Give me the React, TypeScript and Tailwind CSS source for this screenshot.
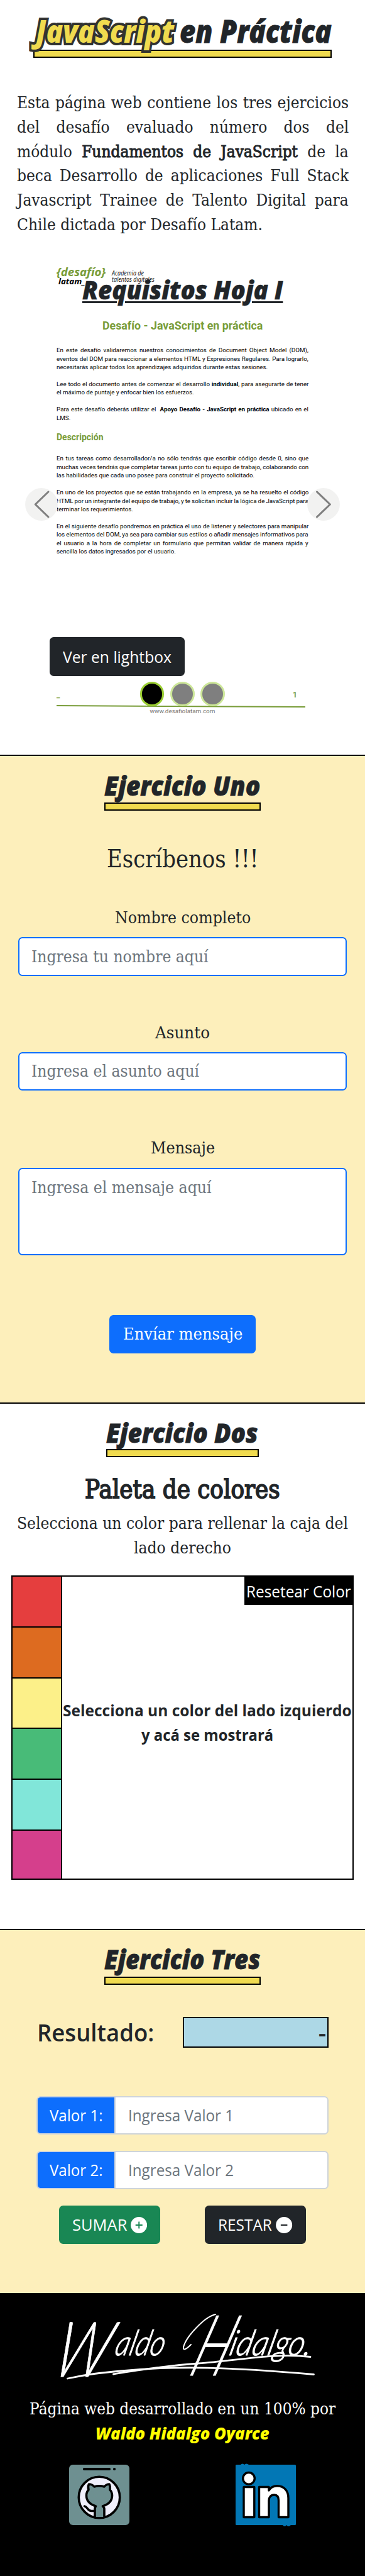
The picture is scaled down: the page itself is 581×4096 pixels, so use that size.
import { useLayoutEffect, useRef, useState, type ReactNode } from "react";

const SLAB = "font-['DejaVu_Serif',serif] text-[25.8px] leading-[38.72px]";
const SANS = "font-['Open_Sans','Noto_Sans',sans-serif] text-[25.8px] leading-[38.72px]";
const DISPLAY = "font-['Open_Sans','Noto_Sans',sans-serif] font-extrabold italic";

/* Stretches one line of text to the width of its box. */
function Fit({ className = "", children }: { className?: string; children: ReactNode }) {
  const box = useRef<HTMLDivElement>(null);
  const text = useRef<HTMLSpanElement>(null);
  const [scale, setScale] = useState(1);
  useLayoutEffect(() => {
    if (box.current && text.current && text.current.offsetWidth > 0) {
      setScale(box.current.offsetWidth / text.current.offsetWidth);
    }
  }, []);
  return (
    <div ref={box} className={`shrink-0 whitespace-nowrap ${className}`}>
      <span ref={text} className="inline-block origin-left" style={{ transform: `scaleX(${scale})` }}>
        {children}
      </span>
    </div>
  );
}

/* Justifies one line of text by widening or narrowing its word gaps. */
function Full({ children }: { children: ReactNode }) {
  const box = useRef<HTMLDivElement>(null);
  const text = useRef<HTMLSpanElement>(null);
  const [gap, setGap] = useState(0);
  useLayoutEffect(() => {
    if (box.current && text.current) {
      const spaces = (text.current.textContent ?? "").split(/\s/).length - 1;
      setGap((box.current.offsetWidth - text.current.offsetWidth) / spaces);
    }
  }, []);
  return (
    <div ref={box} className="whitespace-nowrap">
      <span ref={text} style={{ wordSpacing: `${gap}px` }}>
        {children}
      </span>
    </div>
  );
}

function SectionTitle({ children, width, gap }: { children: string; width: string; gap: string }) {
  return (
    <div className={`mx-auto ${width}`}>
      <Fit className={`${DISPLAY} w-full text-[43px] leading-[44px] [-webkit-text-stroke:0.8px_#212529]`}>{children}</Fit>
      <div className={`h-[13px] border-2 border-black bg-[#f0db4f] ${gap}`} />
    </div>
  );
}

function DocumentPage() {
  return (
    <div className="ml-[90px] w-[401.3px] pt-[28px] font-[Roboto,sans-serif] text-[9.8px] leading-[13.45px] text-black">
      <div className="flex h-[82.3px] font-['Noto_Sans',sans-serif] italic">
        <div className="w-[88px]">
          <Fit className="w-[78px] text-[17px] font-bold leading-[14px] text-[#789c38]">{"{desafío}"}</Fit>
          <Fit className="ml-[3px] mt-[0.6px] w-[43px] text-[13px] font-bold leading-[12.3px]">latam_</Fit>
        </div>
        <div className="pt-[2.8px] text-[10px] leading-[10.4px] text-[#222]">
          <Fit className="w-[51px]">Academia de</Fit>
          <Fit className="w-[68px]">talentos digitales</Fit>
        </div>
      </div>
      <Fit className="ml-[73.4px] w-[255px] text-[17.6px] font-bold leading-[20px] text-[#789c38]">
        Desafío - JavaScript en práctica
      </Fit>
      <div className="mt-[21.8px]">
        <Full>En este desafío validaremos nuestros conocimientos de Document Object Model (DOM),</Full>
        <Full>eventos del DOM para reaccionar a elementos HTML y Expresiones Regulares. Para lograrlo,</Full>
        <Fit className="w-[336px]">necesitarás aplicar todos los aprendizajes adquiridos durante estas sesiones.</Fit>
      </div>
      <div className="mt-[13.45px]">
        <Full>
          Lee todo el documento antes de comenzar el desarrollo <b>individual</b>, para asegurarte de tener
        </Full>
        <Fit className="w-[219px]">el máximo de puntaje y enfocar bien los esfuerzos.</Fit>
      </div>
      <div className="mt-[13.45px]">
        <Full>
          Para este desafío deberás utilizar el &nbsp;<b>Apoyo Desafío - JavaScript en práctica</b> ubicado en el
        </Full>
        <Fit className="w-[22px]">LMS.</Fit>
      </div>
      <Fit className="mt-[15.8px] w-[75px] text-[13.8px] font-bold leading-[16px] text-[#789c38]">Descripción</Fit>
      <div className="mt-[19.4px]">
        <Full>En tus tareas como desarrollador/a no sólo tendrás que escribir código desde 0, sino que</Full>
        <Full>muchas veces tendrás que completar tareas junto con tu equipo de trabajo, colaborando con</Full>
        <Fit className="w-[315px]">las habilidades que cada uno posee para construir el proyecto solicitado.</Fit>
      </div>
      <div className="mt-[13.45px]">
        <Full>En uno de los proyectos que se están trabajando en la empresa, ya se ha resuelto el código</Full>
        <Full>HTML por un integrante del equipo de trabajo, y te solicitan incluir la lógica de JavaScript para</Full>
        <Fit className="w-[122px]">terminar los requerimientos.</Fit>
      </div>
      <div className="mt-[13.45px]">
        <Full>En el siguiente desafío pondremos en práctica el uso de listener y selectores para manipular</Full>
        <Full>los elementos del DOM, ya sea para cambiar sus estilos o añadir mensajes informativos para</Full>
        <Full>el usuario a la hora de completar un formulario que permitan validar de manera rápida y</Full>
        <Fit className="w-[190px]">sencilla los datos ingresados por el usuario.</Fit>
      </div>
      <div className="mt-[213.7px] flex justify-between pr-[18.5px] text-[12px] font-bold leading-[14px] text-[#789c38]">
        <span>_</span>
        <span>1</span>
      </div>
      <svg className="mt-[9px] block h-[4px] w-[396px]" viewBox="0 0 396 4">
        <path d="M0 1.1L396 3" stroke="#789c38" strokeWidth="2" />
      </svg>
      <Fit className="ml-[148.6px] mt-[0.7px] w-[104px] text-[9.9px] leading-[12px] text-[#757575]">www.desafiolatam.com</Fit>
    </div>
  );
}

function Arrow({ d }: { d: string }) {
  return (
    <svg className="h-[52px] w-[52px]" viewBox="0 0 52 52" fill="none">
      <circle cx="26" cy="26" r="25.9" fill="#f2f2f1" />
      <path d={d} stroke="#7f7f7f" strokeWidth="3" strokeLinecap="round" strokeLinejoin="round" />
    </svg>
  );
}

function Carousel() {
  return (
    <section className="relative mt-[21.6px] h-[802.2px]">
      <DocumentPage />
      <h2 className="absolute left-[131px] top-[36.5px]">
        <Fit className={`${DISPLAY} w-[319px] text-[41px] leading-[50px] [-webkit-text-stroke:0.5px_#212529]`}>
          <span className="underline decoration-[3.2px] underline-offset-[3px]">Requisitos Hoja I</span>
        </Fit>
      </h2>
      <button className="absolute left-[40px] top-[377.7px]">
        <Arrow d="M37 6L16.2 26L37 46" />
      </button>
      <button className="absolute left-[489px] top-[377.7px]">
        <Arrow d="M15.5 6L36.4 26L15.5 46" />
      </button>
      <button className="absolute left-[79px] top-[615.3px] flex h-[61.3px] w-[214.8px] items-center justify-center rounded-[6.5px] bg-[#212529] text-white">
        <Fit className={`${SANS} w-[173px]`}>Ver en lightbox</Fit>
      </button>
      <div className="absolute left-[222.7px] top-[686px] flex gap-[9.7px]">
        <span className="h-[38.7px] w-[38.7px] rounded-full border-3 border-[#9acd32] bg-black" />
        <span className="h-[38.7px] w-[38.7px] rounded-full border-3 border-[#cce698] bg-[#7f7f7f]" />
        <span className="h-[38.7px] w-[38.7px] rounded-full border-3 border-[#cce698] bg-[#7f7f7f]" />
      </div>
    </section>
  );
}

const SWATCHES = ["bg-[#e53e3e]", "bg-[#dd6b20]", "bg-[#fcf089]", "bg-[#48bb78]", "bg-[#81e6d9]"];

function ValueInput({ label, hint }: { label: string; hint: string }) {
  return (
    <div className={`${SANS} flex h-[61.3px] items-center overflow-hidden rounded-[6.5px] border-2 border-[#ced4da] bg-white`}>
      <div className="flex h-full w-[124.2px] items-center justify-center border-r-2 border-[#ced4da] bg-[#0d6efd] text-white">
        <Fit className="w-[85px]">{label}</Fit>
      </div>
      <Fit className="ml-[20px] w-[168px] text-[#6c757d]">{hint}</Fit>
    </div>
  );
}

function RoundIcon({ plus }: { plus: boolean }) {
  return (
    <svg className="h-[26px] w-[26.3px]" viewBox="0 0 26 26" fill="none">
      <circle cx="13" cy="13" r="13" fill="white" />
      <path d={plus ? "M8.3 13h9.6M13.1 8.2v9.6" : "M8.5 13h9"} stroke={plus ? "#198754" : "#212529"} strokeWidth="1.9" strokeLinecap="round" />
    </svg>
  );
}

function Signature() {
  return (
    <svg className="block h-[165px] w-[581px] overflow-visible" viewBox="0 0 581 165" fill="none" stroke="white" strokeLinecap="round">
      <g fill="white" stroke="white" strokeWidth="0.8" fontFamily="Lato" fontStyle="italic" fontWeight="300">
        <text transform="translate(80 133) skewX(-16)" fontSize="122" textLength="84" lengthAdjust="spacingAndGlyphs">W</text>
        <text transform="translate(181 99) skewX(-14)" fontSize="56" strokeWidth="1.2" textLength="78" lengthAdjust="spacingAndGlyphs">aldo</text>
        <text transform="translate(298 131) skewX(-20)" fontSize="134" textLength="56" lengthAdjust="spacingAndGlyphs">H</text>
        <text transform="translate(363 99) skewX(-14)" fontSize="56" strokeWidth="1.2" textLength="130" lengthAdjust="spacingAndGlyphs">idalgo.</text>
      </g>
      <path d="M304 82C296 90 291 92 292 86C296 70 325 38 343 34" strokeWidth="2" />
      <path d="M107.5 136C140 129 160 127 192 124C280 115 370 118 499.5 129.5" strokeWidth="2.8" />
      <path d="M180.5 129C225 122 260 116 315 112C382 107 435 95 494 101.5" strokeWidth="2.8" />
    </svg>
  );
}

function GithubIcon() {
  return (
    <svg className="h-[96px] w-[96px]" viewBox="0 0 96 96" fill="none" stroke="black" strokeWidth="3.6" strokeLinecap="round" strokeLinejoin="round">
      <rect width="96" height="96" rx="6" fill="#6e9091" stroke="none" />
      <path d="M24 7H64M72 7h.1" strokeWidth="4.2" />
      <circle cx="48" cy="52" r="32.7" fill="#f0effb" />
      <path
        d="M41 83V70C41 68 42 67 42.5 66C33 63 27.5 58 27.5 49C27.5 45 29 42 31 40C30 37 30 34 31.5 31C35 31 38 32.5 40 35C45 33.5 51 33.5 56 35C58 32.5 61 31 64 31C65.5 34 65.5 37 65 40C67 42 68.5 45 68.5 49C68.5 58 63 63 53.5 66C54.5 67 56 68 56 70V83"
        fill="#6e9091"
      />
      <path d="M24.5 66C30 67 29 74 36 73.5H40" />
    </svg>
  );
}

function LinkedinIcon() {
  return (
    <svg className="h-[96px] w-[96px] overflow-visible" viewBox="0 0 96 96" fill="none" stroke="black" strokeWidth="3.4" strokeLinejoin="round">
      <rect width="96" height="96" rx="1.5" fill="#0277b5" stroke="none" />
      <path d="M8 0q3-3 6 0q3-3 7 0zM75 96q3 4 6 0q3 4 7 0z" fill="#0277b5" stroke="none" />
      <circle cx="21" cy="21.8" r="9.3" fill="white" />
      <rect x="13" y="35.5" width="16.8" height="48" fill="white" />
      <path
        d="M37.5 35.5H53V41C56 36 61 33.8 66 33.8C78 33.8 84 42 84 53V83.5H68.5V57C68.5 51 66 48 61.5 48C56 48 53 52 53 57V83.5H37.5Z"
        fill="white"
      />
    </svg>
  );
}

export default function App() {
  return (
    <main className="h-[4096px] w-[581px] overflow-hidden bg-white text-[#212529]">
      <header className="pt-[19.3px]">
        <h1 className={`${DISPLAY} relative z-10 flex pl-[57px] text-[49px] leading-[60px]`}>
          <Fit className="w-[220px] text-[#f0db4f] [-webkit-text-stroke:8px_#323330] [paint-order:stroke_fill]">JavaScript</Fit>
          <Fit className="ml-[9px] w-[242px] [-webkit-text-stroke:0.8px_#212529]">en Práctica</Fit>
        </h1>
        <div className="ml-[53.4px] h-[13px] w-[474.2px] border-2 border-black bg-[#f0db4f]" />
        <div className={`${SLAB} ml-[26.5px] mt-[51.9px] w-[582px] origin-left scale-x-[0.907]`}>
          <Full>Esta página web contiene los tres ejercicios</Full>
          <Full>del desafío evaluado número dos del</Full>
          <Full>
            módulo <span className="[-webkit-text-stroke:1px_#212529]">Fundamentos de JavaScript</span> de la
          </Full>
          <Full>beca Desarrollo de aplicaciones Full Stack</Full>
          <Full>Javascript Trainee de Talento Digital para</Full>
          <div>Chile dictada por Desafío Latam.</div>
        </div>
      </header>

      <Carousel />

      <section className={`${SLAB} flex h-[1029.3px] flex-col items-center border-t-2 border-black bg-[#fdefbb] pt-[24.3px]`}>
        <SectionTitle width="w-[248.2px]" gap="mt-[5.7px]">Ejercicio Uno</SectionTitle>
        <Fit className="mt-[53.6px] w-[241px] text-[38.7px] leading-[46.5px]">Escríbenos !!!</Fit>
        <Fit className="mt-[50.6px] w-[216px]">Nombre completo</Fit>
        <div className="mt-[11.8px] flex h-[61.4px] w-[523px] items-center rounded-[6.5px] border-2 border-[#0d6efd] bg-white pl-[19.4px] text-[#6c757d]">
          <Fit className="w-[282px]">Ingresa tu nombre aquí</Fit>
        </div>
        <Fit className="mt-[70.8px] w-[87px]">Asunto</Fit>
        <div className="mt-[11.6px] flex h-[61.4px] w-[523px] items-center rounded-[6.5px] border-2 border-[#0d6efd] bg-white pl-[19.4px] text-[#6c757d]">
          <Fit className="w-[267px]">Ingresa el asunto aquí</Fit>
        </div>
        <Fit className="mt-[71.7px] w-[102px]">Mensaje</Fit>
        <div className="mt-[12.3px] h-[138.8px] w-[523px] rounded-[6.5px] border-2 border-[#0d6efd] bg-white pl-[19.4px] pt-[10.3px] text-[#6c757d]">
          <Fit className="w-[287px]">Ingresa el mensaje aquí</Fit>
        </div>
        <button className="mt-[95.1px] flex h-[61.3px] w-[232.7px] items-center justify-center rounded-[6.5px] bg-[#0d6efd] text-white">
          <Fit className="w-[190px]">Envíar mensaje</Fit>
        </button>
      </section>

      <section className={`${SLAB} flex h-[837.2px] flex-col items-center border-t-2 border-black bg-white pt-[24.1px]`}>
        <SectionTitle width="w-[242.3px]" gap="mt-[4px]">Ejercicio Dos</SectionTitle>
        <Fit className="mt-[27.2px] w-[311px] text-[40.7px] leading-[48px] [-webkit-text-stroke:1.8px_#212529]">Paleta de colores</Fit>
        <Fit className="mt-[11.2px] w-[527px]">Selecciona un color para rellenar la caja del</Fit>
        <Fit className="w-[155px]">lado derecho</Fit>
        <div className={`${SANS} mt-[25px] flex h-[484px] w-[545.4px] border-2 border-black`}>
          <div className="flex w-[79.1px] shrink-0 flex-col border-r-2 border-black">
            {SWATCHES.map((color) => (
              <div key={color} className={`h-[80.65px] shrink-0 border-b-2 border-black ${color}`} />
            ))}
            <div className="flex-1 bg-[#d53f8c]" />
          </div>
          <div className="flex flex-1 flex-col items-center">
            <button className="flex h-[44.8px] w-[172.5px] items-center justify-center self-end bg-black pl-[1.6px] text-white">
              <Fit className="w-[167px]">Resetear Color</Fit>
            </button>
            <Fit className="mt-[147.5px] w-[460px] font-bold">Selecciona un color del lado izquierdo</Fit>
            <Fit className="w-[210px] font-bold">y acá se mostrará</Fit>
          </div>
        </div>
      </section>

      <section className="h-[579.4px] border-t-2 border-black bg-[#fdefbb] pt-[23.8px]">
        <SectionTitle width="w-[248.2px]" gap="mt-[6.2px]">Ejercicio Tres</SectionTitle>
        <div className="mx-[58.2px] mt-[51.2px] flex justify-between font-['Open_Sans',sans-serif] text-[38.7px] font-semibold">
          <Fit className="w-[186px] pl-[1px] leading-[48.6px]">Resultado:</Fit>
          <div className="flex h-[48.6px] w-[232.3px] items-center justify-end border-2 border-black bg-[#add8e6] pr-[1.5px] leading-[45px]">-</div>
        </div>
        <div className="mx-[58.2px] mt-[77.2px] flex flex-col gap-[25.9px]">
          <ValueInput label="Valor 1:" hint="Ingresa Valor 1" />
          <ValueInput label="Valor 2:" hint="Ingresa Valor 2" />
        </div>
        <div className={`${SANS} mt-[25.8px] flex gap-[71.1px] pl-[93.7px] text-white`}>
          <button className="flex h-[61.3px] w-[161.2px] items-center justify-center gap-[6px] rounded-[6.5px] bg-[#198754]">
            <Fit className="w-[87px]">SUMAR</Fit>
            <RoundIcon plus />
          </button>
          <button className="flex h-[61.3px] w-[161.2px] items-center justify-center gap-[6px] rounded-[6.5px] bg-[#212529]">
            <Fit className="w-[86px]">RESTAR</Fit>
            <RoundIcon plus={false} />
          </button>
        </div>
      </section>

      <footer className="flex h-[450px] flex-col items-center bg-black text-white">
        <Signature />
        <Fit className={`${SLAB} w-[487px]`}>Página web desarrollado en un 100% por</Fit>
        <Fit className={`${DISPLAY} w-[277px] text-[26px] leading-[38.7px] text-[#ffff00]`}>Waldo Hidalgo Oyarce</Fit>
        <div className="mt-[30.6px] flex gap-[168.6px]">
          <GithubIcon />
          <LinkedinIcon />
        </div>
      </footer>
    </main>
  );
}
